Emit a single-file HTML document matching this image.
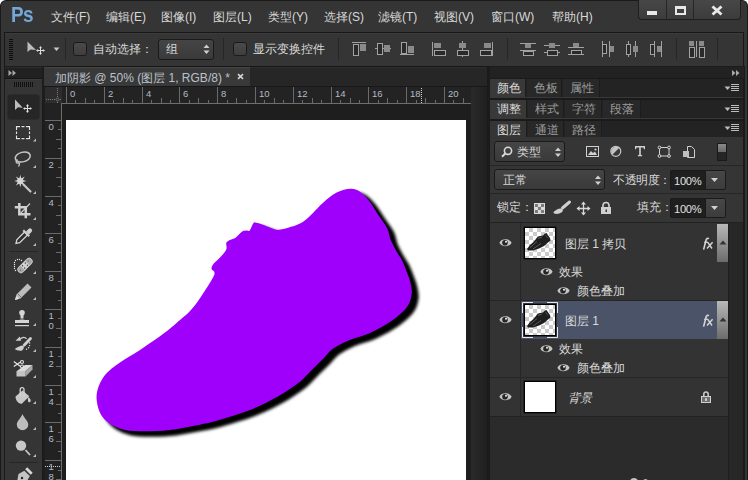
<!DOCTYPE html>
<html><head><meta charset="utf-8">
<style>
*{margin:0;padding:0;box-sizing:border-box}
html,body{width:748px;height:480px;overflow:hidden;background:#fff}
body{font-family:"Liberation Sans",sans-serif;font-size:12px;color:#d4d4d4;position:relative}
.a{position:absolute}
.win{left:0;top:0;width:748px;height:480px;background:#353535;border-left:1px solid #1a1a1a;border-right:1px solid #1a1a1a;border-top:1px solid #1a1a1a;border-radius:6px 6px 0 0;overflow:hidden}
.menu{top:10px;font-size:12px;color:#d8d8d8;line-height:14px;white-space:nowrap}
.sep{width:1px;background:#252525}
</style></head><body>
<div class="a win"></div>
<!-- Ps logo -->
<div class="a" style="left:11px;top:4px;font-size:22px;line-height:22px;font-weight:bold;color:#74a6d8;letter-spacing:-0.6px;transform:scaleX(0.86);transform-origin:0 0">Ps</div>
<!-- menus -->
<div class="a menu" style="left:51px">文件(F)</div>
<div class="a menu" style="left:106px">编辑(E)</div>
<div class="a menu" style="left:161px">图像(I)</div>
<div class="a menu" style="left:213px">图层(L)</div>
<div class="a menu" style="left:268px">类型(Y)</div>
<div class="a menu" style="left:324px">选择(S)</div>
<div class="a menu" style="left:378px">滤镜(T)</div>
<div class="a menu" style="left:434px">视图(V)</div>
<div class="a menu" style="left:491px">窗口(W)</div>
<div class="a menu" style="left:552px">帮助(H)</div>
<!-- window buttons -->
<div class="a" style="left:638px;top:0;width:103px;height:20px;background:linear-gradient(#474747,#3c3c3c);border:1px solid #1e1e1e;border-top:none;border-radius:0 0 4px 4px"></div>
<div class="a sep" style="left:666px;top:0;height:19px;background:#262626"></div>
<div class="a sep" style="left:693px;top:0;height:19px;background:#262626"></div>
<div class="a" style="left:647px;top:11px;width:10px;height:4px;background:#e8e8e8"></div>
<div class="a" style="left:675px;top:6px;width:11px;height:9px;border:2px solid #e8e8e8;border-top-width:3px"></div>
<svg class="a" style="left:711px;top:5px" width="12" height="11" viewBox="0 0 12 11"><path d="M1.5 1.5 L10.5 9.5 M10.5 1.5 L1.5 9.5" stroke="#e8e8e8" stroke-width="2.9"/></svg>

<!-- options bar -->
<div class="a" style="left:4px;top:32px;width:740px;height:35px;border:1px solid #171717;background:#353535"></div><div class="a" style="left:5px;top:33px;width:738px;height:1px;background:#3c3c3c"></div>

<!-- options bar content -->
<div class="a" style="left:9px;top:39px;width:4px;height:21px;background:repeating-linear-gradient(#0e0e0e 0 1px,#353535 1px 2px)"></div>
<svg class="a" style="left:26px;top:40px" width="36" height="16" viewBox="0 0 36 16">
 <path d="M1.5 1.5 L1.5 12 L4.5 9.5 L10 10 Z" fill="#bdbdbd"/>
<path d="M14.5 7.5V13.5M11.5 10.5H17.5" stroke="#111" stroke-width="2.5" opacity="0.5"/><path d="M14.5 7.0V14.0M11.0 10.5H18.0" stroke="#e0e0e0" stroke-width="1"/><path d="M14.5 6.0l-1.6 2.2h3.2zM14.5 15.0l-1.6 -2.2h3.2zM10.0 10.5l2.2 -1.6v3.2zM19.0 10.5l-2.2 -1.6v3.2z" fill="#e0e0e0"/>
 <path d="M27.5 7.5 h6 l-3 3.5z" fill="#c8c8c8"/>
</svg>
<div class="a sep" style="left:65px;top:38px;height:22px;background:#262626"></div>
<div class="a" style="left:73px;top:42px;width:14px;height:14px;border:1px solid #1a1a1a;border-radius:3px;background:linear-gradient(#4a4a4a,#3e3e3e)"></div>
<div class="a menu" style="left:93px;top:42px">自动选择：</div>
<div class="a" style="left:158px;top:39px;width:56px;height:21px;border:1px solid #1a1a1a;border-radius:3px;background:linear-gradient(#454545,#3a3a3a)"></div>
<div class="a menu" style="left:166px;top:42px">组</div>
<svg class="a" style="left:202px;top:43px" width="9" height="12" viewBox="0 0 9 12"><path d="M4.5 1.5 L7.5 5 H1.5z M4.5 11 L7.5 7.5 H1.5z" fill="#cfcfcf"/></svg>
<div class="a sep" style="left:223px;top:38px;height:22px;background:#262626"></div>
<div class="a" style="left:233px;top:42px;width:14px;height:14px;border:1px solid #1a1a1a;border-radius:3px;background:linear-gradient(#4a4a4a,#3e3e3e)"></div>
<div class="a menu" style="left:253px;top:42px">显示变换控件</div>
<div class="a sep" style="left:338px;top:38px;height:22px;background:#262626"></div>
<div class="a sep" style="left:507px;top:38px;height:22px;background:#262626"></div>
<div class="a sep" style="left:676px;top:38px;height:22px;background:#262626"></div>
<div class="a sep" style="left:717px;top:38px;height:22px;background:#262626"></div>
<svg class="a" style="left:0;top:0" width="748" height="70" viewBox="0 0 748 70"><path d="M352 42.5H366" stroke="#a2a2a2"/><rect x="353.5" y="44.5" width="5" height="11" fill="#2a2a2a" stroke="#a2a2a2"/><rect x="360" y="44" width="6" height="7" fill="#8a8a8a"/><path d="M375 48.5H391" stroke="#a2a2a2"/><rect x="377.5" y="43.5" width="5" height="11" fill="#2a2a2a" stroke="#a2a2a2"/><rect x="384" y="45" width="6" height="7" fill="#8a8a8a"/><path d="M400 54.5H414" stroke="#a2a2a2"/><rect x="401.5" y="42.5" width="5" height="11" fill="#2a2a2a" stroke="#a2a2a2"/><rect x="408" y="46" width="6" height="7" fill="#8a8a8a"/><path d="M432.5 42V56" stroke="#a2a2a2"/><rect x="434" y="43" width="7" height="5" fill="#8a8a8a"/><rect x="434.5" y="50.5" width="11" height="5" fill="#2a2a2a" stroke="#a2a2a2"/><path d="M462.5 41V57" stroke="#a2a2a2"/><rect x="459" y="43" width="7" height="5" fill="#8a8a8a"/><rect x="457.5" y="50.5" width="11" height="5" fill="#2a2a2a" stroke="#a2a2a2"/><path d="M492.5 42V56" stroke="#a2a2a2"/><rect x="484" y="43" width="7" height="5" fill="#8a8a8a"/><rect x="480.5" y="50.5" width="11" height="5" fill="#2a2a2a" stroke="#a2a2a2"/><path d="M520 43.5H536" stroke="#a2a2a2"/><rect x="525" y="44" width="6" height="4" fill="#8a8a8a"/><path d="M520 50.5H536" stroke="#a2a2a2"/><rect x="523.5" y="51.5" width="10" height="4" fill="#2a2a2a" stroke="#a2a2a2"/><path d="M544 45.5H560" stroke="#a2a2a2"/><rect x="549" y="43" width="6" height="5" fill="#8a8a8a"/><path d="M544 52.5H560" stroke="#a2a2a2"/><rect x="547.5" y="50.5" width="10" height="5" fill="#2a2a2a" stroke="#a2a2a2"/><rect x="573" y="43" width="6" height="4" fill="#8a8a8a"/><path d="M568 47.5H584" stroke="#a2a2a2"/><rect x="571.5" y="50.5" width="10" height="4" fill="#2a2a2a" stroke="#a2a2a2"/><path d="M568 54.5H584" stroke="#a2a2a2"/><path d="M602.5 41V57" stroke="#a2a2a2"/><rect x="602.5" y="44.5" width="4" height="9" fill="#2a2a2a" stroke="#a2a2a2"/><path d="M609.5 41V57" stroke="#a2a2a2"/><rect x="610" y="46" width="4" height="6" fill="#8a8a8a"/><path d="M628.5 41V57" stroke="#a2a2a2"/><rect x="626.5" y="44.5" width="4" height="10" fill="#2a2a2a" stroke="#a2a2a2"/><path d="M635.5 41V57" stroke="#a2a2a2"/><rect x="633" y="46" width="5" height="6" fill="#8a8a8a"/><rect x="650.5" y="44.5" width="4" height="10" fill="#2a2a2a" stroke="#a2a2a2"/><path d="M654.5 41V57" stroke="#a2a2a2"/><rect x="657" y="46" width="4" height="6" fill="#8a8a8a"/><path d="M661.5 41V57" stroke="#a2a2a2"/><rect x="689" y="41" width="5" height="5" fill="#8a8a8a"/><rect x="689.5" y="47.5" width="5" height="10" fill="#2a2a2a" stroke="#a2a2a2"/><path d="M696.5 41V57" stroke="#a2a2a2"/><rect x="699" y="41" width="5" height="5" fill="#8a8a8a"/><rect x="699.5" y="47.5" width="5" height="10" fill="#2a2a2a" stroke="#a2a2a2"/></svg>

<!-- left tools panel -->
<div class="a" style="left:4px;top:66px;width:40px;height:414px;background:#1c1c1c"></div>
<div class="a" style="left:5px;top:67px;width:37px;height:413px;background:#353535"></div>
<div class="a" style="left:5px;top:67px;width:37px;height:12px;background:#212121;border-top:1px solid #2b2b2b;border-bottom:1px solid #161616"></div><div class="a" style="left:5px;top:79px;width:37px;height:1px;background:#3b3b3b"></div>
<svg class="a" style="left:8px;top:70px" width="9" height="6" viewBox="0 0 9 6"><path d="M0.5 0 L4 3 L0.5 6z M4.5 0 L8 3 L4.5 6z" fill="#a8a8a8"/></svg>
<div class="a" style="left:14px;top:82px;width:20px;height:5px;background:repeating-linear-gradient(90deg,#111 0 1px,transparent 1px 2px)"></div>
<div class="a" style="left:8px;top:95px;width:31px;height:24px;background:#262626;border-radius:3px;box-shadow:0 0 0 1px #2c2c2c"></div>
<div class="a" style="left:9px;top:251px;width:29px;height:1px;background:#262626"></div>
<div class="a" style="left:9px;top:462px;width:29px;height:1px;background:#262626"></div>

<svg class="a" style="left:0;top:0" width="748" height="480" viewBox="0 0 748 480"><path d="M15 99.5V110L18 107.3L22.8 107.8z" fill="#bdbdbd"/><path d="M27.5 105.5V111.5M24.5 108.5H30.5" stroke="#111" stroke-width="2.5" opacity="0.5"/><path d="M27.5 105.0V112.0M24.0 108.5H31.0" stroke="#e0e0e0" stroke-width="1"/><path d="M27.5 104.0l-1.6 2.2h3.2zM27.5 113.0l-1.6 -2.2h3.2zM23.0 108.5l2.2 -1.6v3.2zM32.0 108.5l-2.2 -1.6v3.2z" fill="#e0e0e0"/><path d="M16 126.5h4m1.5 0h3m1.5 0h4M16 138.5h4m1.5 0h3m1.5 0h4M16.5 126v4m0 1.5v2.5m0 1.5v3.5M29.5 126v4m0 1.5v2.5m0 1.5v3.5" stroke="#151515" stroke-width="2.6" opacity="0.5"/><path d="M16 126.5h4m1.5 0h3m1.5 0h4M16 138.5h4m1.5 0h3m1.5 0h4M16.5 126v4m0 1.5v2.5m0 1.5v3.5M29.5 126v4m0 1.5v2.5m0 1.5v3.5" stroke="#e4e4e4" stroke-width="1.25"/><path d="M36 141.5V138.5L33 141.5z" fill="#bdbdbd"/><ellipse cx="22.8" cy="157" rx="7.6" ry="4.8" transform="rotate(-15 22.8 157)" fill="none" stroke="#c8c8c8" stroke-width="1.5"/><path d="M17.5 159.5 C15 161 16 163.5 18.5 163 C20 162.5 19.5 165 18.5 166.5" fill="none" stroke="#c8c8c8" stroke-width="1.3"/><path d="M36 168V165L33 168z" fill="#bdbdbd"/><path d="M20.30 174.80L21.29 178.60L24.68 176.62L22.70 180.01L26.50 181.00L22.70 181.99L24.68 185.38L21.29 183.40L20.30 187.20L19.31 183.40L15.92 185.38L17.90 181.99L14.10 181.00L17.90 180.01L15.92 176.62L19.31 178.60z" fill="#d4d4d4"/><circle cx="20.3" cy="181" r="3" fill="#d4d4d4"/><path d="M23.5 184.5L30.5 191.5" stroke="#c8c8c8" stroke-width="2.2" stroke-linecap="round"/><path d="M36 194V191L33 194z" fill="#bdbdbd"/><path d="M19.3 203V214.3H30.5M14.8 207.3H25.8V218.3" fill="none" stroke="#d0d0d0" stroke-width="2.5"/><path d="M19.5 214.5L30 203.5" stroke="#d0d0d0" stroke-width="1.1"/><path d="M36 220V217L33 220z" fill="#bdbdbd"/><path d="M16 243.5L16.8 239.8L24.5 232L27.5 235L19.7 242.7z" fill="#2e2e2e" stroke="#d4d4d4" stroke-width="1.3"/><path d="M22.5 231L28.5 237L30 235.5L24 229.5z" fill="#d0d0d0"/><path d="M26 231.5L28.5 229A2 2 0 0 1 31.5 232L29 234.5z" fill="#d0d0d0"/><path d="M36 246V243L33 246z" fill="#bdbdbd"/><circle cx="15.5" cy="260.5" r="0.65" fill="#e8e8e8"/><circle cx="17.5" cy="259.5" r="0.65" fill="#e8e8e8"/><circle cx="19.5" cy="259.5" r="0.65" fill="#e8e8e8"/><circle cx="21.5" cy="260.5" r="0.65" fill="#e8e8e8"/><circle cx="14.5" cy="262.5" r="0.65" fill="#e8e8e8"/><circle cx="14.5" cy="264.5" r="0.65" fill="#e8e8e8"/><circle cx="14.5" cy="266.5" r="0.65" fill="#e8e8e8"/><circle cx="14.5" cy="268.5" r="0.65" fill="#e8e8e8"/><circle cx="15.5" cy="270.5" r="0.65" fill="#e8e8e8"/><g transform="rotate(-45 25 265.5)"><rect x="16" y="262.2" width="18" height="6.6" rx="3.3" fill="#a6a6a6" stroke="#d4d4d4" stroke-width="0.8"/><rect x="21.5" y="262.4" width="7" height="6.2" fill="#d2d2d2"/><circle cx="23" cy="264" r="0.7" fill="#444"/><circle cx="27" cy="264" r="0.7" fill="#444"/><circle cx="23" cy="267" r="0.7" fill="#444"/><circle cx="27" cy="267" r="0.7" fill="#444"/><circle cx="18.5" cy="265.5" r="0.6" fill="#666"/><circle cx="30.5" cy="264.5" r="0.6" fill="#666"/></g><path d="M36 274V271L33 274z" fill="#bdbdbd"/><path d="M15 300L16.5 294.5L27.5 283.5L31.5 287.5L20.5 298.5z" fill="#bcbcbc"/><path d="M17.5 293.5L21.5 297.5M18.5 292.5L26.5 284.5" stroke="#777" stroke-width="1"/><path d="M15 300L16.2 296L19 298.8z" fill="#e0e0e0"/><path d="M36 300V297L33 300z" fill="#bdbdbd"/><circle cx="22" cy="312.8" r="2.8" fill="#d4d4d4"/><path d="M20.5 314H23.5V318.5H20.5z" fill="#d4d4d4"/><path d="M16.5 322.5C16.5 318.5 27.5 318.5 27.5 322.5z" fill="#d4d4d4"/><rect x="15" y="320" width="14" height="3" fill="#d4d4d4"/><rect x="15" y="325" width="14" height="1.2" fill="#d4d4d4"/><path d="M36 326V323L33 326z" fill="#bdbdbd"/><path d="M20 339.2C22.5 337 25 336.8 26.5 338.8" fill="none" stroke="#d0d0d0" stroke-width="1.3"/><path d="M15.5 340.8L19.8 336.5L21 340.8z" fill="#d0d0d0"/><path d="M30.5 338.5L24.3 345" stroke="#d0d0d0" stroke-width="2.8" stroke-linecap="round"/><path d="M14.8 349C17 347.5 20 345.5 23.5 345.5C24.5 347 23.5 349.5 22 350.5C19.5 351 16.5 350.5 14.8 349z" fill="#cfcfcf"/><circle cx="29.6" cy="343" r="0.7" fill="#e8e8e8"/><circle cx="29.6" cy="345.6" r="0.7" fill="#e8e8e8"/><circle cx="28.6" cy="347.8" r="0.7" fill="#e8e8e8"/><circle cx="26.5" cy="349.3" r="0.7" fill="#e8e8e8"/><path d="M36 352V349L33 352z" fill="#bdbdbd"/><path d="M17 371L25 365L32.5 365L25.5 371z" fill="#dcdcdc"/><path d="M25.5 371L32.5 365L32.5 369.5L25.5 376.5z" fill="#a8a8a8"/><path d="M16.5 371H25.5V376.5H16.5z" fill="#c4c4c4"/><path d="M13.8 361.5L20.5 366.5M13.8 366.5L20.5 362" stroke="#e4e4e4" stroke-width="1.2"/><circle cx="22" cy="362" r="1.5" fill="none" stroke="#e4e4e4" stroke-width="1.1"/><circle cx="22" cy="366.5" r="1.5" fill="none" stroke="#e4e4e4" stroke-width="1.1"/><path d="M36 378V375L33 378z" fill="#bdbdbd"/><path d="M15.5 396.5L22.5 390.5L29.3 396.3L21.8 403.8C19 404 15.5 401 15.5 396.5z" fill="#c8c8c8"/><path d="M20.2 396V389.5A1.9 1.9 0 0 1 24 389.5V396.5" fill="none" stroke="#d4d4d4" stroke-width="1.3"/><path d="M27.5 397C29.5 397.5 30.8 399 30.8 401A1.5 1.5 0 0 1 28 401.5C28 400 28 398.5 27.5 397z" fill="#c8c8c8"/><path d="M36 404V401L33 404z" fill="#bdbdbd"/><path d="M22.5 414C21 418 16.8 421 16.8 424.5A5.7 5.7 0 0 0 28.3 424.5C28.3 421 24 418 22.5 414z" fill="#bdbdbd"/><path d="M36 430V427L33 430z" fill="#bdbdbd"/><circle cx="21" cy="445.6" r="5.2" fill="#c8c8c8"/><path d="M25.5 450L30 455" stroke="#c8c8c8" stroke-width="1.8"/><path d="M36 457V454L33 457z" fill="#bdbdbd"/><path d="M24.3 470.8L29.8 476L27 481L16.5 485L18.5 474z" fill="#c4c4c4"/><path d="M25.2 469.3L27.2 467.3L32.7 472.8L30.7 474.8z" fill="#d8d8d8"/><circle cx="22" cy="478" r="1.2" fill="#222"/></svg>
<!-- document area -->
<div class="a" style="left:44px;top:67px;width:444px;height:19px;background:#262626;border-top:1px solid #2e2e2e"></div>
<div class="a" style="left:44px;top:67px;width:206px;height:19px;background:#393939;border-top:1px solid #454545"></div>
<div class="a menu" style="left:55px;top:71px;color:#b9c2cc">加阴影 @ 50% (图层 1, RGB/8) *</div>
<svg class="a" style="left:237px;top:73px" width="7" height="7" viewBox="0 0 7 7"><path d="M1 1.2L6 5.8M6 1.2L1 5.8" stroke="#d4d4d4" stroke-width="1.6"/></svg>
<!-- rulers -->
<div class="a" style="left:44px;top:86px;width:427px;height:394px;background:#1e1e1e"></div>
<div class="a" style="left:45px;top:86px;width:426px;height:18px;background:#232323;border-top:1px solid #171717"></div>
<div class="a" style="left:45px;top:86px;width:17px;height:394px;background:#222"></div>
<div class="a" style="left:45px;top:86px;width:17px;height:17px;background:#2d2d2d"></div>
<div class="a" style="left:62px;top:103px;width:409px;height:1px;background:#6e6e6e"></div>
<div class="a" style="left:61px;top:103px;width:1px;height:377px;background:#6e6e6e"></div>
<div class="a" style="left:471px;top:86px;width:17px;height:394px;background:linear-gradient(90deg,#2a2a2a,#1f1f1f)"></div><div class="a" style="left:44px;top:86px;width:444px;height:1px;background:#171717"></div><div class="a" style="left:487px;top:66px;width:2px;height:414px;background:#1a1a1a"></div>
<div class="a" style="left:488px;top:66px;width:2px;height:414px;background:#1c1c1c"></div>
<!--RULER--><svg class="a" style="left:0;top:0" width="748" height="480" viewBox="0 0 748 480"><path d="M66.5 87V103" stroke="#6a6a6a"/><path d="M75.5 100V103" stroke="#6a6a6a"/><path d="M85.5 98V103" stroke="#6a6a6a"/><path d="M94.5 100V103" stroke="#6a6a6a"/><path d="M104.5 87V103" stroke="#6a6a6a"/><path d="M113.5 100V103" stroke="#6a6a6a"/><path d="M123.5 98V103" stroke="#6a6a6a"/><path d="M132.5 100V103" stroke="#6a6a6a"/><path d="M142.5 87V103" stroke="#6a6a6a"/><path d="M151.5 100V103" stroke="#6a6a6a"/><path d="M161.5 98V103" stroke="#6a6a6a"/><path d="M170.5 100V103" stroke="#6a6a6a"/><path d="M179.5 87V103" stroke="#6a6a6a"/><path d="M189.5 100V103" stroke="#6a6a6a"/><path d="M198.5 98V103" stroke="#6a6a6a"/><path d="M208.5 100V103" stroke="#6a6a6a"/><path d="M217.5 87V103" stroke="#6a6a6a"/><path d="M227.5 100V103" stroke="#6a6a6a"/><path d="M236.5 98V103" stroke="#6a6a6a"/><path d="M246.5 100V103" stroke="#6a6a6a"/><path d="M255.5 87V103" stroke="#6a6a6a"/><path d="M264.5 100V103" stroke="#6a6a6a"/><path d="M274.5 98V103" stroke="#6a6a6a"/><path d="M283.5 100V103" stroke="#6a6a6a"/><path d="M293.5 87V103" stroke="#6a6a6a"/><path d="M302.5 100V103" stroke="#6a6a6a"/><path d="M312.5 98V103" stroke="#6a6a6a"/><path d="M321.5 100V103" stroke="#6a6a6a"/><path d="M331.5 87V103" stroke="#6a6a6a"/><path d="M340.5 100V103" stroke="#6a6a6a"/><path d="M350.5 98V103" stroke="#6a6a6a"/><path d="M359.5 100V103" stroke="#6a6a6a"/><path d="M368.5 87V103" stroke="#6a6a6a"/><path d="M378.5 100V103" stroke="#6a6a6a"/><path d="M387.5 98V103" stroke="#6a6a6a"/><path d="M397.5 100V103" stroke="#6a6a6a"/><path d="M406.5 87V103" stroke="#6a6a6a"/><path d="M416.5 100V103" stroke="#6a6a6a"/><path d="M425.5 98V103" stroke="#6a6a6a"/><path d="M435.5 100V103" stroke="#6a6a6a"/><path d="M444.5 87V103" stroke="#6a6a6a"/><path d="M453.5 100V103" stroke="#6a6a6a"/><path d="M463.5 98V103" stroke="#6a6a6a"/><text x="70" y="97" font-size="9.5" fill="#b4bcc6" font-family="Liberation Sans">0</text><text x="108" y="97" font-size="9.5" fill="#b4bcc6" font-family="Liberation Sans">2</text><text x="146" y="97" font-size="9.5" fill="#b4bcc6" font-family="Liberation Sans">4</text><text x="183" y="97" font-size="9.5" fill="#b4bcc6" font-family="Liberation Sans">6</text><text x="221" y="97" font-size="9.5" fill="#b4bcc6" font-family="Liberation Sans">8</text><text x="259" y="97" font-size="9.5" fill="#b4bcc6" font-family="Liberation Sans">10</text><text x="297" y="97" font-size="9.5" fill="#b4bcc6" font-family="Liberation Sans">12</text><text x="335" y="97" font-size="9.5" fill="#b4bcc6" font-family="Liberation Sans">14</text><text x="372" y="97" font-size="9.5" fill="#b4bcc6" font-family="Liberation Sans">16</text><text x="410" y="97" font-size="9.5" fill="#b4bcc6" font-family="Liberation Sans">18</text><text x="448" y="97" font-size="9.5" fill="#b4bcc6" font-family="Liberation Sans">20</text><path d="M45 120.5H61" stroke="#6a6a6a"/><path d="M58 129.5H61" stroke="#6a6a6a"/><path d="M56 139.5H61" stroke="#6a6a6a"/><path d="M58 148.5H61" stroke="#6a6a6a"/><path d="M45 158.5H61" stroke="#6a6a6a"/><path d="M58 167.5H61" stroke="#6a6a6a"/><path d="M56 177.5H61" stroke="#6a6a6a"/><path d="M58 186.5H61" stroke="#6a6a6a"/><path d="M45 196.5H61" stroke="#6a6a6a"/><path d="M58 205.5H61" stroke="#6a6a6a"/><path d="M56 215.5H61" stroke="#6a6a6a"/><path d="M58 224.5H61" stroke="#6a6a6a"/><path d="M45 233.5H61" stroke="#6a6a6a"/><path d="M58 243.5H61" stroke="#6a6a6a"/><path d="M56 252.5H61" stroke="#6a6a6a"/><path d="M58 262.5H61" stroke="#6a6a6a"/><path d="M45 271.5H61" stroke="#6a6a6a"/><path d="M58 281.5H61" stroke="#6a6a6a"/><path d="M56 290.5H61" stroke="#6a6a6a"/><path d="M58 300.5H61" stroke="#6a6a6a"/><path d="M45 309.5H61" stroke="#6a6a6a"/><path d="M58 318.5H61" stroke="#6a6a6a"/><path d="M56 328.5H61" stroke="#6a6a6a"/><path d="M58 337.5H61" stroke="#6a6a6a"/><path d="M45 347.5H61" stroke="#6a6a6a"/><path d="M58 356.5H61" stroke="#6a6a6a"/><path d="M56 366.5H61" stroke="#6a6a6a"/><path d="M58 375.5H61" stroke="#6a6a6a"/><path d="M45 385.5H61" stroke="#6a6a6a"/><path d="M58 394.5H61" stroke="#6a6a6a"/><path d="M56 404.5H61" stroke="#6a6a6a"/><path d="M58 413.5H61" stroke="#6a6a6a"/><path d="M45 422.5H61" stroke="#6a6a6a"/><path d="M58 432.5H61" stroke="#6a6a6a"/><path d="M56 441.5H61" stroke="#6a6a6a"/><path d="M58 451.5H61" stroke="#6a6a6a"/><path d="M45 460.5H61" stroke="#6a6a6a"/><path d="M58 470.5H61" stroke="#6a6a6a"/><path d="M56 479.5H61" stroke="#6a6a6a"/><text x="48.5" y="130" font-size="9.5" fill="#b4bcc6" font-family="Liberation Sans">0</text><text x="48.5" y="168" font-size="9.5" fill="#b4bcc6" font-family="Liberation Sans">2</text><text x="48.5" y="206" font-size="9.5" fill="#b4bcc6" font-family="Liberation Sans">4</text><text x="48.5" y="243" font-size="9.5" fill="#b4bcc6" font-family="Liberation Sans">6</text><text x="48.5" y="281" font-size="9.5" fill="#b4bcc6" font-family="Liberation Sans">8</text><text x="48.5" y="319" font-size="9.5" fill="#b4bcc6" font-family="Liberation Sans">1</text><text x="48.5" y="329" font-size="9.5" fill="#b4bcc6" font-family="Liberation Sans">0</text><text x="48.5" y="357" font-size="9.5" fill="#b4bcc6" font-family="Liberation Sans">1</text><text x="48.5" y="367" font-size="9.5" fill="#b4bcc6" font-family="Liberation Sans">2</text><text x="48.5" y="395" font-size="9.5" fill="#b4bcc6" font-family="Liberation Sans">1</text><text x="48.5" y="405" font-size="9.5" fill="#b4bcc6" font-family="Liberation Sans">4</text><text x="48.5" y="432" font-size="9.5" fill="#b4bcc6" font-family="Liberation Sans">1</text><text x="48.5" y="442" font-size="9.5" fill="#b4bcc6" font-family="Liberation Sans">6</text><text x="48.5" y="470" font-size="9.5" fill="#b4bcc6" font-family="Liberation Sans">1</text><text x="48.5" y="480" font-size="9.5" fill="#b4bcc6" font-family="Liberation Sans">8</text><path d="M57.5 88V97M57.5 102V104" stroke="#7a7a7a" stroke-dasharray="1 1"/><path d="M46 99.5H55M60 99.5H61" stroke="#7a7a7a" stroke-dasharray="1 1"/><path d="M57.5 97.8L59.2 99.5L57.5 101.2L55.8 99.5z" fill="none" stroke="#7a7a7a" stroke-width="0.9"/><path d="M421.5 88V103" stroke="#d0d0d0" stroke-dasharray="1 1"/><path d="M45 466.5H61" stroke="#d0d0d0" stroke-dasharray="1 1"/></svg><!--/RULER-->
<!-- canvas -->
<div class="a" style="left:66px;top:120px;width:400px;height:360px;background:#fff"></div>
<!-- right panels -->
<div class="a" style="left:489px;top:66px;width:256px;height:414px;background:#1b1b1b"></div><div class="a" style="left:490px;top:67px;width:254px;height:11px;background:#222"></div><svg class="a" style="left:732px;top:70px" width="8" height="6" viewBox="0 0 8 6"><path d="M0 0 L3.5 3 L0 6z M4 0 L7.5 3 L4 6z" fill="#a8a8a8"/></svg><div class="a" style="left:489px;top:78px;width:255px;height:20px;background:#232323;border:1px solid #1a1a1a"></div><div class="a" style="left:490px;top:79px;width:36px;height:18px;background:#393939;border-right:1px solid #1c1c1c"></div><div class="a menu" style="left:497px;top:81px;color:#dadada">颜色</div><div class="a" style="left:527px;top:79px;width:35px;height:18px;background:#282828;border-right:1px solid #1c1c1c"></div><div class="a menu" style="left:534px;top:81px;color:#9c9c9c">色板</div><div class="a" style="left:563px;top:79px;width:37px;height:18px;background:#282828;border-right:1px solid #1c1c1c"></div><div class="a menu" style="left:570px;top:81px;color:#9c9c9c">属性</div><svg class="a" style="left:724px;top:84px" width="16" height="8" viewBox="0 0 16 8"><path d="M0.5 2.5h6l-3 3.5z" fill="#bcbcbc"/><path d="M7 0.5h8M7 2.5h8M7 4.5h8M7 6.5h8" stroke="#bcbcbc"/></svg><div class="a" style="left:489px;top:99px;width:255px;height:20px;background:#232323;border:1px solid #1a1a1a"></div><div class="a" style="left:490px;top:100px;width:37px;height:18px;background:#393939;border-right:1px solid #1c1c1c"></div><div class="a menu" style="left:497px;top:102px;color:#dadada">调整</div><div class="a" style="left:528px;top:100px;width:36px;height:18px;background:#282828;border-right:1px solid #1c1c1c"></div><div class="a menu" style="left:535px;top:102px;color:#9c9c9c">样式</div><div class="a" style="left:565px;top:100px;width:37px;height:18px;background:#282828;border-right:1px solid #1c1c1c"></div><div class="a menu" style="left:572px;top:102px;color:#9c9c9c">字符</div><div class="a" style="left:603px;top:100px;width:38px;height:18px;background:#282828;border-right:1px solid #1c1c1c"></div><div class="a menu" style="left:610px;top:102px;color:#9c9c9c">段落</div><svg class="a" style="left:724px;top:105px" width="16" height="8" viewBox="0 0 16 8"><path d="M0.5 2.5h6l-3 3.5z" fill="#bcbcbc"/><path d="M7 0.5h8M7 2.5h8M7 4.5h8M7 6.5h8" stroke="#bcbcbc"/></svg><div class="a" style="left:490px;top:97px;width:253px;height:1px;background:#383838"></div><div class="a" style="left:490px;top:118px;width:253px;height:1px;background:#383838"></div><div class="a" style="left:489px;top:120px;width:255px;height:360px;background:#353535;border:1px solid #1a1a1a"></div><div class="a" style="left:490px;top:121px;width:253px;height:16px;background:#232323"></div><div class="a" style="left:490px;top:121px;width:37px;height:16px;background:#353535;border-right:1px solid #1c1c1c"></div><div class="a menu" style="left:497px;top:123px;color:#dadada">图层</div><div class="a" style="left:528px;top:121px;width:36px;height:16px;background:#282828;border-right:1px solid #1c1c1c"></div><div class="a menu" style="left:535px;top:123px;color:#9c9c9c">通道</div><div class="a" style="left:565px;top:121px;width:37px;height:16px;background:#282828;border-right:1px solid #1c1c1c"></div><div class="a menu" style="left:572px;top:123px;color:#9c9c9c">路径</div><svg class="a" style="left:724px;top:124px" width="16" height="8" viewBox="0 0 16 8"><path d="M0.5 2.5h6l-3 3.5z" fill="#bcbcbc"/><path d="M7 0.5h8M7 2.5h8M7 4.5h8M7 6.5h8" stroke="#bcbcbc"/></svg>

<!-- layers content -->
<div class="a" style="left:494px;top:141px;width:71px;height:21px;border:1px solid #1a1a1a;border-radius:3px;background:linear-gradient(#454545,#3a3a3a)"></div>
<svg class="a" style="left:501px;top:146px" width="12" height="12" viewBox="0 0 12 12"><circle cx="7" cy="4.8" r="3.6" fill="none" stroke="#d8d8d8" stroke-width="1.6"/><path d="M4.5 7.3 L1 10.8" stroke="#d8d8d8" stroke-width="2"/></svg>
<div class="a menu" style="left:517px;top:145px">类型</div>
<svg class="a" style="left:554px;top:146px" width="8" height="12" viewBox="0 0 8 12"><path d="M4 1.5 L7 5 H1z M4 11 L7 7.5 H1z" fill="#cfcfcf"/></svg>
<!-- filter icons -->
<svg class="a" style="left:580px;top:140px" width="150" height="24" viewBox="580 140 150 24">
 <rect x="586.5" y="146.5" width="12" height="10" fill="none" stroke="#d0d0d0"/>
 <path d="M588 155 L591 151 L593 153 L595 151.5 L597 155z" fill="#d0d0d0"/><circle cx="595.5" cy="149.5" r="1.1" fill="#d0d0d0"/>
 <circle cx="615.8" cy="151.3" r="5" fill="#3a3a3a" stroke="#c4c4c4" stroke-width="1.2"/><path d="M619.3 147.8 A5 5 0 0 0 612.3 154.8z" fill="#c4c4c4"/>
 <path d="M635 146h10v3.2h-1l-0.6-1.6h-2.6v7.2l1.3 0.5v0.9h-4.2v-0.9l1.3-0.5v-7.2h-2.6l-0.6 1.6h-1z" fill="#d0d0d0"/>
 <rect x="659.5" y="147.5" width="9.5" height="8.5" fill="none" stroke="#d0d0d0"/>
 <circle cx="659.5" cy="147.5" r="1.4" fill="#333" stroke="#d8d8d8" stroke-width="1"/><circle cx="669" cy="147.5" r="1.4" fill="#333" stroke="#d8d8d8" stroke-width="1"/>
 <circle cx="659.5" cy="156" r="1.4" fill="#333" stroke="#d8d8d8" stroke-width="1"/><circle cx="669" cy="156" r="1.4" fill="#333" stroke="#d8d8d8" stroke-width="1"/>
 <path d="M687.5 146.5 h4 l3 3 v8 h-7z" fill="none" stroke="#d0d0d0"/><rect x="683" y="151" width="6" height="6" fill="#c0c0c0"/>
</svg>
<div class="a" style="left:717px;top:143px;width:10px;height:18px;border:1px solid #1a1a1a;background:linear-gradient(#8a8a8a 0,#6a6a6a 50%,#262626 50%)"></div>
<div class="a" style="left:490px;top:165px;width:253px;height:1px;background:#262626"></div>
<!-- blend row -->
<div class="a" style="left:494px;top:169px;width:111px;height:21px;border:1px solid #1a1a1a;border-radius:3px;background:linear-gradient(#454545,#3a3a3a)"></div>
<div class="a menu" style="left:503px;top:173px">正常</div>
<svg class="a" style="left:594px;top:174px" width="8" height="12" viewBox="0 0 8 12"><path d="M4 1.5 L7 5 H1z M4 11 L7 7.5 H1z" fill="#cfcfcf"/></svg>
<div class="a menu" style="left:613px;top:173px;letter-spacing:-0.5px">不透明度：</div>
<div class="a" style="left:670px;top:170px;width:56px;height:20px;border:1px solid #1a1a1a;border-radius:2px;background:#1f1f1f"></div>
<div class="a" style="left:705px;top:171px;width:20px;height:18px;background:linear-gradient(#474747,#3c3c3c);border-left:1px solid #1a1a1a"></div>
<svg class="a" style="left:711px;top:178px" width="7" height="4" viewBox="0 0 7 4"><path d="M0 0h7l-3.5 4z" fill="#d0d0d0"/></svg>
<div class="a menu" style="left:674px;top:174px;color:#e0e0e0;font-size:11.2px;letter-spacing:-0.3px">100%</div>
<div class="a" style="left:490px;top:193px;width:253px;height:1px;background:#262626"></div>
<!-- lock row -->
<div class="a menu" style="left:497px;top:200px">锁定：</div>
<svg class="a" style="left:530px;top:198px" width="90" height="20" viewBox="530 198 90 20">
 <rect x="534" y="203" width="11" height="11" fill="#dadada"/>
 <path d="M535 204h3v3h-3zM541 204h3v3h-3zM538 207h3v3h-3zM535 210h3v3h-3zM541 210h3v3h-3z" fill="#7c7c7c"/>
 <path d="M569.5 202 L562.5 208" stroke="#d0d0d0" stroke-width="3" stroke-linecap="round"/>
 <path d="M553.5 212C555 210.5 557 209 560 208.5C562.5 208.3 563.5 210 562.5 211.5C561 213.5 557.5 214.3 555 213.8C554 213.6 553.5 213 553.5 212z" fill="#d0d0d0"/>
 <path d="M583.5 203.5 V213.5 M578.5 208.5 H588.5" stroke="#d8d8d8" stroke-width="1.3"/>
 <path d="M583.5 201.5 l-2.5 3 h5z M583.5 215.5 l-2.5 -3 h5z M576.5 208.5 l3 -2.5 v5z M590.5 208.5 l-3 -2.5 v5z" fill="#d8d8d8"/>
 <path d="M603 207.5 v-2 a3 3 0 0 1 6 0 v2" fill="none" stroke="#d0d0d0" stroke-width="1.6"/>
 <rect x="601" y="207" width="10" height="7" fill="#d0d0d0"/><rect x="605.5" y="209.5" width="1.5" height="2.5" fill="#3a3a3a"/>
</svg>
<div class="a menu" style="left:637px;top:200px">填充：</div>
<div class="a" style="left:670px;top:198px;width:56px;height:20px;border:1px solid #1a1a1a;border-radius:2px;background:#1f1f1f"></div>
<div class="a" style="left:705px;top:199px;width:20px;height:18px;background:linear-gradient(#474747,#3c3c3c);border-left:1px solid #1a1a1a"></div>
<svg class="a" style="left:711px;top:206px" width="7" height="4" viewBox="0 0 7 4"><path d="M0 0h7l-3.5 4z" fill="#d0d0d0"/></svg>
<div class="a menu" style="left:674px;top:202px;color:#e0e0e0;font-size:11.2px;letter-spacing:-0.3px">100%</div>
<div class="a" style="left:490px;top:222px;width:253px;height:1px;background:#222"></div>
<!-- layer list -->
<div class="a" style="left:490px;top:223px;width:238px;height:257px;background:#2b2b2b"></div>
<div class="a" style="left:728px;top:223px;width:15px;height:257px;background:#272727;border-left:1px solid #1f1f1f"></div>
<div class="a" style="left:490px;top:223px;width:238px;height:194px;background:#333"></div>
<div class="a" style="left:521px;top:301px;width:196px;height:38px;background:#4a5368"></div>
<div class="a" style="left:490px;top:300px;width:238px;height:1px;background:#262626"></div>
<div class="a" style="left:490px;top:377px;width:238px;height:1px;background:#262626"></div>
<div class="a" style="left:490px;top:416px;width:238px;height:1px;background:#222"></div>
<div class="a" style="left:520px;top:223px;width:1px;height:194px;background:#262626"></div>
<div class="a" style="left:717px;top:224px;width:11px;height:38px;background:linear-gradient(#b8b8b8,#6c6c6c)"></div>
<svg class="a" style="left:719px;top:240px" width="8" height="5" viewBox="0 0 8 5"><path d="M0.5 4.5 L4 0.5 L7.5 4.5z" fill="#333"/></svg>
<div class="a" style="left:717px;top:301px;width:11px;height:38px;background:linear-gradient(#b8b8b8,#6c6c6c)"></div>
<svg class="a" style="left:719px;top:317px" width="8" height="5" viewBox="0 0 8 5"><path d="M0.5 4.5 L4 0.5 L7.5 4.5z" fill="#333"/></svg>
<svg class="a" style="left:499px;top:238px" width="13" height="10" viewBox="0 0 13 10"><path d="M0.4 4.8 C2 0.2 11 0.2 12.6 4.8 C11 9.3 2 9.3 0.4 4.8z" fill="#c4c4c4"/><circle cx="6" cy="4.8" r="2.8" fill="#262626"/><circle cx="7" cy="3.8" r="1" fill="#eee"/></svg><svg class="a" style="left:540px;top:267px" width="13" height="10" viewBox="0 0 13 10"><path d="M0.4 4.8 C2 0.2 11 0.2 12.6 4.8 C11 9.3 2 9.3 0.4 4.8z" fill="#c4c4c4"/><circle cx="6" cy="4.8" r="2.8" fill="#262626"/><circle cx="7" cy="3.8" r="1" fill="#eee"/></svg><svg class="a" style="left:557px;top:286px" width="13" height="10" viewBox="0 0 13 10"><path d="M0.4 4.8 C2 0.2 11 0.2 12.6 4.8 C11 9.3 2 9.3 0.4 4.8z" fill="#c4c4c4"/><circle cx="6" cy="4.8" r="2.8" fill="#262626"/><circle cx="7" cy="3.8" r="1" fill="#eee"/></svg>
<svg class="a" style="left:499px;top:315px" width="13" height="10" viewBox="0 0 13 10"><path d="M0.4 4.8 C2 0.2 11 0.2 12.6 4.8 C11 9.3 2 9.3 0.4 4.8z" fill="#c4c4c4"/><circle cx="6" cy="4.8" r="2.8" fill="#262626"/><circle cx="7" cy="3.8" r="1" fill="#eee"/></svg><svg class="a" style="left:540px;top:344px" width="13" height="10" viewBox="0 0 13 10"><path d="M0.4 4.8 C2 0.2 11 0.2 12.6 4.8 C11 9.3 2 9.3 0.4 4.8z" fill="#c4c4c4"/><circle cx="6" cy="4.8" r="2.8" fill="#262626"/><circle cx="7" cy="3.8" r="1" fill="#eee"/></svg><svg class="a" style="left:557px;top:363px" width="13" height="10" viewBox="0 0 13 10"><path d="M0.4 4.8 C2 0.2 11 0.2 12.6 4.8 C11 9.3 2 9.3 0.4 4.8z" fill="#c4c4c4"/><circle cx="6" cy="4.8" r="2.8" fill="#262626"/><circle cx="7" cy="3.8" r="1" fill="#eee"/></svg>
<svg class="a" style="left:499px;top:392px" width="13" height="10" viewBox="0 0 13 10"><path d="M0.4 4.8 C2 0.2 11 0.2 12.6 4.8 C11 9.3 2 9.3 0.4 4.8z" fill="#c4c4c4"/><circle cx="6" cy="4.8" r="2.8" fill="#262626"/><circle cx="7" cy="3.8" r="1" fill="#eee"/></svg>
<div class="a" style="left:524px;top:227px;width:32px;height:32px;border:1px solid #000;box-shadow:0 0 0 0.5px #111;background-color:#fff;background-image:linear-gradient(45deg,#cbcbcb 25%,transparent 25%,transparent 75%,#cbcbcb 75%),linear-gradient(45deg,#cbcbcb 25%,transparent 25%,transparent 75%,#cbcbcb 75%);background-size:8px 8px;background-position:0 0,4px 4px"></div><svg class="a" style="left:525px;top:228px" width="30" height="30" viewBox="525 228 30 30"><path d="M527 249L530 245L534 241.5L537 237.5L539 236.3L543 235.5L545 233.5L546.5 233L548.5 236L550 238L550.5 240.5L548 242.5L544 246L539 248.5L533 250.5L528 250.5z" fill="#1e1e1e"/><path d="M530 247.5L537 241.5M533 249L541 243.5M538 238.5L542 237" stroke="#6a6a6a" stroke-width="0.8"/><path d="M545.5 235L548 238.5" stroke="#555" stroke-width="0.8"/></svg>
<div class="a" style="left:524px;top:304px;width:32px;height:32px;border:1px solid #000;box-shadow:0 0 0 0.5px #111;background-color:#fff;background-image:linear-gradient(45deg,#cbcbcb 25%,transparent 25%,transparent 75%,#cbcbcb 75%),linear-gradient(45deg,#cbcbcb 25%,transparent 25%,transparent 75%,#cbcbcb 75%);background-size:8px 8px;background-position:0 0,4px 4px"></div><svg class="a" style="left:525px;top:305px" width="30" height="30" viewBox="525 228 30 30"><path d="M527 249L530 245L534 241.5L537 237.5L539 236.3L543 235.5L545 233.5L546.5 233L548.5 236L550 238L550.5 240.5L548 242.5L544 246L539 248.5L533 250.5L528 250.5z" fill="#1e1e1e"/><path d="M530 247.5L537 241.5M533 249L541 243.5M538 238.5L542 237" stroke="#6a6a6a" stroke-width="0.8"/><path d="M545.5 235L548 238.5" stroke="#555" stroke-width="0.8"/></svg>
<div class="a" style="left:524px;top:381px;width:32px;height:32px;border:1px solid #000;box-shadow:0 0 0 0.5px #111;background:#fff"></div>
<svg class="a" style="left:521px;top:301px" width="38" height="38" viewBox="0 0 38 38"><path d="M1.5 12V1.5H12 M26 1.5H36.5V12 M36.5 26V36.5H26 M12 36.5H1.5V26" fill="none" stroke="#e8e8e8"/></svg>
<div class="a menu" style="left:565px;top:237px">图层 1 拷贝</div>
<div class="a menu" style="left:559px;top:265px">效果</div>
<div class="a menu" style="left:577px;top:284px">颜色叠加</div>
<div class="a menu" style="left:565px;top:314px">图层 1</div>
<div class="a menu" style="left:559px;top:342px">效果</div>
<div class="a menu" style="left:577px;top:361px">颜色叠加</div>
<div class="a menu" style="left:568px;top:391px;font-style:italic">背景</div>
<svg class="a" style="left:700px;top:237px" width="14" height="14" viewBox="0 0 14 14"><path d="M9 1.6C7.6 0.9 6.4 1.6 6 3.3L3.6 12.6" fill="none" stroke="#d4d4d4" stroke-width="1.6"/><path d="M4.2 5.3H8" stroke="#d4d4d4" stroke-width="1.3"/><path d="M7.8 5.3L12 11.5M12.6 5.3L7 11.5" stroke="#d4d4d4" stroke-width="1.5"/></svg>
<svg class="a" style="left:700px;top:314px" width="14" height="14" viewBox="0 0 14 14"><path d="M9 1.6C7.6 0.9 6.4 1.6 6 3.3L3.6 12.6" fill="none" stroke="#d4d4d4" stroke-width="1.6"/><path d="M4.2 5.3H8" stroke="#d4d4d4" stroke-width="1.3"/><path d="M7.8 5.3L12 11.5M12.6 5.3L7 11.5" stroke="#d4d4d4" stroke-width="1.5"/></svg>
<svg class="a" style="left:700px;top:390px" width="12" height="14" viewBox="0 0 12 14"><path d="M3.8 6.5V4.3a2.2 2.2 0 0 1 4.4 0V6.5" fill="none" stroke="#cfcfcf" stroke-width="1.5"/><rect x="1" y="6" width="10" height="7" fill="#cfcfcf"/><rect x="2" y="7" width="8" height="5" fill="#707070"/><rect x="5.2" y="8.3" width="1.6" height="2.6" fill="#e8e8e8"/></svg>
<div class="a" style="left:630px;top:478px;width:8px;height:8px;border-radius:50%;background:#c4c4c4"></div>
<div class="a" style="left:643px;top:479px;width:5px;height:6px;border-radius:50%;background:#b4b4b4"></div>

<!-- shoe -->
<!--SHOE--><svg class="a" style="left:0;top:0" width="748" height="480" viewBox="0 0 748 480">
<defs><filter id="blur1" x="-10%" y="-10%" width="120%" height="120%"><feGaussianBlur stdDeviation="1.5"/></filter>
<filter id="blur0" x="-10%" y="-10%" width="120%" height="120%"><feGaussianBlur stdDeviation="0.75"/></filter></defs>
<g transform="translate(6 4.5)" filter="url(#blur1)"><path d="M97.0 402.5C96.4 398.3 96.2 394.6 97.5 390.0C98.8 385.4 101.2 379.6 105.0 375.0C108.8 370.4 114.2 366.7 120.0 362.5C125.8 358.3 132.5 355.0 140.0 350.0C147.5 345.0 158.3 337.5 165.0 332.5C171.7 327.5 175.8 323.6 180.0 320.0C184.2 316.4 186.7 314.6 190.0 311.0C193.3 307.4 196.0 304.1 200.0 298.2C204.0 292.2 212.2 280.1 214.1 275.3C216.0 270.5 211.8 270.9 211.6 269.1C211.4 267.3 211.9 266.1 213.1 264.4C214.3 262.7 216.8 261.0 218.8 258.8C220.8 256.6 224.0 253.2 225.3 251.3C226.6 249.4 226.4 248.9 226.6 247.5C226.8 246.1 225.7 244.1 226.3 242.8C226.9 241.6 228.4 240.8 230.0 240.0C231.6 239.2 233.6 239.2 235.6 237.8C237.6 236.4 240.3 232.8 242.2 231.6C244.1 230.4 245.7 230.8 246.9 230.6C248.2 230.4 248.6 231.8 249.7 230.6C250.8 229.3 252.4 224.4 253.5 223.1C254.6 221.8 254.6 222.5 256.3 222.8C258.0 223.1 261.0 224.0 263.8 225.0C266.6 226.0 270.7 228.0 273.2 228.8C275.7 229.6 276.3 229.9 278.8 229.7C281.3 229.5 284.7 228.8 288.2 227.8C291.7 226.8 296.5 225.4 300.0 223.6C303.5 221.8 305.4 220.1 309.2 216.7C313.0 213.2 318.3 206.9 322.9 202.9C327.5 198.9 332.1 195.0 336.7 192.6C341.3 190.2 346.7 188.9 350.5 188.7C354.3 188.5 356.6 189.5 359.6 191.5C362.7 193.5 365.7 196.8 368.8 200.6C371.9 204.4 374.9 209.8 378.0 214.4C381.1 219.0 385.1 224.0 387.2 228.2C389.3 232.4 389.1 235.8 390.6 239.6C392.1 243.4 394.4 247.6 396.3 251.1C398.2 254.6 400.3 256.9 402.0 260.3C403.7 263.7 405.4 268.2 406.7 271.7C408.0 275.1 409.2 277.4 410.0 281.0C410.8 284.6 412.2 289.2 411.7 293.5C411.2 297.8 410.3 302.5 407.0 307.0C403.7 311.5 398.2 316.3 392.1 320.6C386.0 324.9 377.9 329.4 370.5 332.8C363.1 336.2 353.7 338.3 347.4 341.0C341.1 343.7 336.6 346.1 332.5 349.1C328.4 352.1 326.8 355.2 323.0 359.0C319.2 362.8 313.8 367.9 310.0 371.7C306.2 375.5 304.4 378.1 300.0 381.7C295.6 385.3 288.9 389.8 283.3 393.3C277.8 396.8 272.2 399.7 266.7 402.5C261.1 405.3 255.6 407.8 250.0 410.0C244.4 412.2 238.9 414.0 233.3 415.8C227.8 417.6 222.2 419.3 216.7 420.8C211.1 422.3 207.8 423.2 200.0 424.7C192.2 426.2 179.2 428.9 170.0 430.0C160.8 431.1 152.5 431.2 145.0 431.2C137.5 431.2 130.8 431.2 125.0 430.0C119.2 428.8 114.0 426.2 110.0 423.8C106.0 421.2 103.4 418.5 101.2 415.0C99.1 411.5 97.6 406.7 97.0 402.5Z" fill="#000" stroke="#000" stroke-width="2"/></g>
<path d="M97.0 402.5C96.4 398.3 96.2 394.6 97.5 390.0C98.8 385.4 101.2 379.6 105.0 375.0C108.8 370.4 114.2 366.7 120.0 362.5C125.8 358.3 132.5 355.0 140.0 350.0C147.5 345.0 158.3 337.5 165.0 332.5C171.7 327.5 175.8 323.6 180.0 320.0C184.2 316.4 186.7 314.6 190.0 311.0C193.3 307.4 196.0 304.1 200.0 298.2C204.0 292.2 212.2 280.1 214.1 275.3C216.0 270.5 211.8 270.9 211.6 269.1C211.4 267.3 211.9 266.1 213.1 264.4C214.3 262.7 216.8 261.0 218.8 258.8C220.8 256.6 224.0 253.2 225.3 251.3C226.6 249.4 226.4 248.9 226.6 247.5C226.8 246.1 225.7 244.1 226.3 242.8C226.9 241.6 228.4 240.8 230.0 240.0C231.6 239.2 233.6 239.2 235.6 237.8C237.6 236.4 240.3 232.8 242.2 231.6C244.1 230.4 245.7 230.8 246.9 230.6C248.2 230.4 248.6 231.8 249.7 230.6C250.8 229.3 252.4 224.4 253.5 223.1C254.6 221.8 254.6 222.5 256.3 222.8C258.0 223.1 261.0 224.0 263.8 225.0C266.6 226.0 270.7 228.0 273.2 228.8C275.7 229.6 276.3 229.9 278.8 229.7C281.3 229.5 284.7 228.8 288.2 227.8C291.7 226.8 296.5 225.4 300.0 223.6C303.5 221.8 305.4 220.1 309.2 216.7C313.0 213.2 318.3 206.9 322.9 202.9C327.5 198.9 332.1 195.0 336.7 192.6C341.3 190.2 346.7 188.9 350.5 188.7C354.3 188.5 356.6 189.5 359.6 191.5C362.7 193.5 365.7 196.8 368.8 200.6C371.9 204.4 374.9 209.8 378.0 214.4C381.1 219.0 385.1 224.0 387.2 228.2C389.3 232.4 389.1 235.8 390.6 239.6C392.1 243.4 394.4 247.6 396.3 251.1C398.2 254.6 400.3 256.9 402.0 260.3C403.7 263.7 405.4 268.2 406.7 271.7C408.0 275.1 409.2 277.4 410.0 281.0C410.8 284.6 412.2 289.2 411.7 293.5C411.2 297.8 410.3 302.5 407.0 307.0C403.7 311.5 398.2 316.3 392.1 320.6C386.0 324.9 377.9 329.4 370.5 332.8C363.1 336.2 353.7 338.3 347.4 341.0C341.1 343.7 336.6 346.1 332.5 349.1C328.4 352.1 326.8 355.2 323.0 359.0C319.2 362.8 313.8 367.9 310.0 371.7C306.2 375.5 304.4 378.1 300.0 381.7C295.6 385.3 288.9 389.8 283.3 393.3C277.8 396.8 272.2 399.7 266.7 402.5C261.1 405.3 255.6 407.8 250.0 410.0C244.4 412.2 238.9 414.0 233.3 415.8C227.8 417.6 222.2 419.3 216.7 420.8C211.1 422.3 207.8 423.2 200.0 424.7C192.2 426.2 179.2 428.9 170.0 430.0C160.8 431.1 152.5 431.2 145.0 431.2C137.5 431.2 130.8 431.2 125.0 430.0C119.2 428.8 114.0 426.2 110.0 423.8C106.0 421.2 103.4 418.5 101.2 415.0C99.1 411.5 97.6 406.7 97.0 402.5Z" fill="#9e00fc" filter="url(#blur0)"/>
</svg><!--/SHOE-->
</body></html>
